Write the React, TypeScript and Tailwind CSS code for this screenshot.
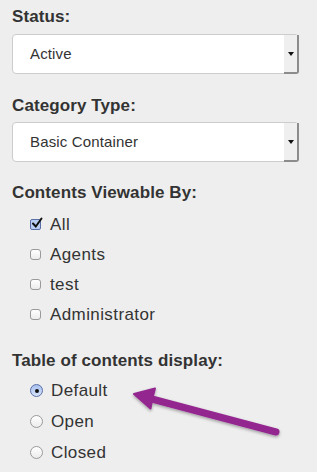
import React from "react";

const font = { fontFamily: '"Liberation Sans", Arial, Helvetica, sans-serif' };

function Select({ value }: { value: string }) {
  return (
    <div className="relative h-[40px] w-[287px] rounded-[4px] border border-[#cccccc] bg-white">
      <div className="flex h-full items-center pl-[17px] text-[15px] tracking-[0.15px] text-[#333333]">{value}</div>
      <div className="absolute right-[-1px] top-[0px] bottom-[-1px] flex w-[15px] items-center justify-center rounded-br-[3px] border-r-2 border-b-2 border-[#8c8c8c] bg-[#efefef]">
        <svg width="6" height="4" viewBox="0 0 6 4" className="ml-[0px] mt-[1px]">
          <polygon points="0,0 6,0 3,4" fill="#111" />
        </svg>
      </div>
    </div>
  );
}

function Check({ checked, label }: { checked?: boolean; label: string }) {
  return (
    <div className="flex h-[30px] items-center">
      <span
        className={
          checked
            ? "relative flex h-[11px] w-[11px] items-center justify-center rounded-[2px] border border-[#5a6fa8] bg-[#b9cdf2]"
            : "relative h-[11px] w-[11px] rounded-[3px] border border-[#9a9a9a] bg-gradient-to-b from-[#ffffff] to-[#ececec]"
        }
      >
        {checked && (
          <svg width="12" height="12" viewBox="0 0 12 12" className="absolute left-[0px] top-[-3px]">
            <path d="M2 6.5 L4.8 9.5 L10.5 1.5" stroke="#111" strokeWidth="2" fill="none" strokeLinecap="round" />
          </svg>
        )}
      </span>
      <span className="ml-[9px] text-[17px] leading-none tracking-[0.4px] text-[#333333]">{label}</span>
    </div>
  );
}

function Radio({ checked, label }: { checked?: boolean; label: string }) {
  return (
    <div className="flex h-[31px] items-center">
      <span
        className={
          checked
            ? "flex h-[13px] w-[13px] items-center justify-center rounded-full border border-[#5a6fa8] bg-gradient-to-b from-[#a7c0ef] to-[#d6e3fa]"
            : "h-[13px] w-[13px] rounded-full border border-[#9a9a9a] bg-gradient-to-b from-[#ffffff] to-[#ececec]"
        }
      >
        {checked && <span className="h-[4px] w-[4px] rounded-full bg-[#111]" />}
      </span>
      <span className="ml-[8px] text-[17px] leading-none tracking-[0.4px] text-[#333333]">{label}</span>
    </div>
  );
}

function Label({ children }: { children: React.ReactNode }) {
  return <div className="h-[20px] text-[17px] font-bold leading-[20px] tracking-[0.1px] text-[#333333]">{children}</div>;
}

export default function App() {
  return (
    <div className="relative h-[472px] w-[317px] overflow-hidden bg-[#eeeeee] pl-[12px] pt-[7px]" style={font}>
      <Label>Status:</Label>
      <div className="mt-[7px]">
        <Select value="Active" />
      </div>
      <div className="mt-[22px]">
        <Label>Category Type:</Label>
      </div>
      <div className="mt-[6px]">
        <Select value="Basic Container" />
      </div>
      <div className="mt-[21px]">
        <Label>Contents Viewable By:</Label>
      </div>
      <div className="mt-[6px] pl-[18px]">
        <Check checked label="All" />
        <Check label="Agents" />
        <Check label="test" />
        <Check label="Administrator" />
      </div>
      <div className="mt-[22px]">
        <Label>Table of contents display:</Label>
      </div>
      <div className="mt-[4px] pl-[18px]">
        <Radio checked label="Default" />
        <Radio label="Open" />
        <Radio label="Closed" />
      </div>
      <svg className="absolute left-0 top-0" width="317" height="472" viewBox="0 0 317 472">
        <defs>
          <filter id="sh" x="-10%" y="-30%" width="120%" height="160%">
            <feDropShadow dx="0" dy="1.5" stdDeviation="1.5" floodColor="#000" floodOpacity="0.35" />
          </filter>
        </defs>
        <g filter="url(#sh)">
          <line x1="150" y1="398.5" x2="276" y2="432" stroke="#93278f" strokeWidth="7" strokeLinecap="round" />
          <path d="M134 394 L155 388.5 Q152 398 150.5 408.5 Z" fill="#93278f" stroke="#93278f" strokeWidth="2" strokeLinejoin="round" />
        </g>
      </svg>
    </div>
  );
}
